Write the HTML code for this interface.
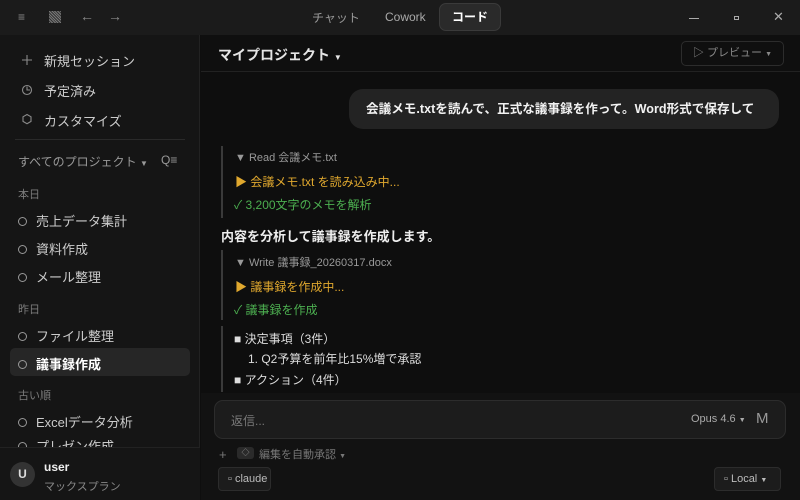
<!DOCTYPE html>
<html><head><meta charset="utf-8"><style>
*{box-sizing:border-box;margin:0;padding:0}
body{width:800px;height:500px;background:#0e0e0e;font-family:"Liberation Sans","Noto Sans CJK JP",sans-serif;color:#ddd;position:relative;overflow:hidden;font-size:13px}
.abs{position:absolute;white-space:nowrap}
#top{left:0;top:0;width:800px;height:35px;background:#1b1b1b}
#side{left:0;top:35px;width:200px;height:465px;background:#151515;border-right:1px solid #222}
#hdr{left:201px;top:35px;width:599px;height:37px;border-bottom:1px solid #222;background:#0f0f0f}
.g{color:#8a8a8a}
.it{font-size:13px;color:#ccc}
.sec{font-size:11px;color:#7a7a7a}
.circ{display:inline-block;width:9px;height:9px;border:1.3px solid #999;border-radius:50%;margin-right:9px;vertical-align:0px}
.bar{width:2px;background:#3a3a3a}
</style></head><body>
<div class="abs" id="top"></div>
<div class="abs g" style="left:18px;top:10px;font-size:12px">≡</div>
<div class="abs" style="left:49px;top:11px;width:12px;height:12px;background:repeating-linear-gradient(45deg,#777 0 1px,#333 1px 2px)"></div>
<div class="abs g" style="left:80px;top:8px;font-size:14px">←</div>
<div class="abs g" style="left:108px;top:8px;font-size:14px">→</div>
<div class="abs" style="left:312px;top:9px;font-size:12px;color:#999">チャット</div>
<div class="abs" style="left:385px;top:10px;font-size:12px;color:#aaa">Cowork</div>
<div class="abs" style="left:439px;top:3px;width:62px;height:28px;background:#2a2a2a;border:1px solid #3a3a3a;border-radius:7px;color:#fff;font-weight:bold;font-size:12px;text-align:center;line-height:26px">コード</div>
<div class="abs" style="left:689px;top:18px;width:10px;height:1px;background:#aaa"></div>
<div class="abs" style="left:734px;top:16px;width:5px;height:4px;border:1px solid #aaa"></div>
<div class="abs g" style="left:773px;top:9px;font-size:13px;color:#aaa">✕</div>

<div class="abs" id="side"></div>
<svg class="abs" style="left:0;top:0" width="40" height="140" fill="none" stroke="#8a8a8a" stroke-width="1.1">
<path d="M27 55v10M22 60h10"/>
<circle cx="27" cy="90" r="4.5"/><path d="M27 86.5v3.5h3"/>
<path d="M27 114.5l4 2.3v4.6l-4 2.3-4-2.3v-4.6z"/>
</svg>
<div class="abs it" style="left:44px;top:51px">新規セッション</div>
<div class="abs it" style="left:44px;top:81px">予定済み</div>
<div class="abs it" style="left:44px;top:111px">カスタマイズ</div>
<div class="abs" style="left:15px;top:139px;width:170px;height:1px;background:#2a2a2a"></div>
<div class="abs" style="left:18px;top:153px;font-size:12px;color:#999">すべてのプロジェクト <span style="font-size:8px">▼</span></div>
<div class="abs" style="left:161px;top:153px;font-size:12px;color:#999">Q≡</div>
<div class="abs sec" style="left:18px;top:186px">本日</div>
<div class="abs it" style="left:18px;top:211px"><span class="circ"></span>売上データ集計</div>
<div class="abs it" style="left:18px;top:239px"><span class="circ"></span>資料作成</div>
<div class="abs it" style="left:18px;top:267px"><span class="circ"></span>メール整理</div>
<div class="abs sec" style="left:18px;top:301px">昨日</div>
<div class="abs it" style="left:18px;top:326px"><span class="circ"></span>ファイル整理</div>
<div class="abs" style="left:10px;top:348px;width:180px;height:28px;background:#262626;border-radius:5px"></div>
<div class="abs it" style="left:18px;top:354px;color:#fff;font-weight:bold"><span class="circ"></span>議事録作成</div>
<div class="abs sec" style="left:18px;top:387px">古い順</div>
<div class="abs it" style="left:18px;top:412px"><span class="circ"></span>Excelデータ分析</div>
<div class="abs it" style="left:18px;top:440px;height:7px;overflow:hidden;line-height:13px"><span class="circ"></span>プレゼン作成</div>
<div class="abs" style="left:0;top:447px;width:200px;height:53px;background:#151515;border-top:1px solid #222"></div>
<div class="abs" style="left:10px;top:462px;width:25px;height:25px;border-radius:50%;background:#333;color:#ddd;font-size:12px;text-align:center;line-height:25px;font-weight:bold">U</div>
<div class="abs" style="left:44px;top:460px;font-size:12px;color:#eee;font-weight:bold">user</div>
<div class="abs" style="left:44px;top:478px;font-size:11px;color:#888">マックスプラン</div>

<div class="abs" id="hdr"></div>
<div class="abs" style="left:218px;top:45px;font-size:14px;font-weight:bold;color:#e5e5e5">マイプロジェクト <span style="font-size:8px">▼</span></div>
<div class="abs" style="left:681px;top:41px;width:103px;height:25px;border:1px solid #2c2c2c;border-radius:5px;color:#888;font-size:11px;line-height:23px;padding-left:11px">▷ プレビュー <span style="font-size:7px">▼</span></div>

<div class="abs" style="left:349px;top:89px;width:430px;height:40px;background:#232323;border-radius:14px;color:#f2f2f2;font-weight:bold;font-size:12.6px;line-height:40px;padding-left:17px">会議メモ.txtを読んで、正式な議事録を作って。Word形式で保存して</div>

<div class="abs bar" style="left:221px;top:146px;height:72px"></div>
<div class="abs" style="left:235px;top:149px;font-size:11px;color:#999">▼ Read 会議メモ.txt</div>
<div class="abs" style="left:235px;top:173px;font-size:12px;color:#e0a82e">▶ 会議メモ.txt を読み込み中...</div>
<div class="abs" style="left:234px;top:196px;font-size:12px;color:#4caf50">✓ 3,200文字のメモを解析</div>
<div class="abs" style="left:221px;top:226px;font-size:13px;color:#eee;font-weight:bold">内容を分析して議事録を作成します。</div>
<div class="abs bar" style="left:221px;top:250px;height:70px"></div>
<div class="abs" style="left:235px;top:254px;font-size:11px;color:#999">▼ Write 議事録_20260317.docx</div>
<div class="abs" style="left:235px;top:278px;font-size:12px;color:#e0a82e">▶ 議事録を作成中...</div>
<div class="abs" style="left:234px;top:301px;font-size:12px;color:#4caf50">✓ 議事録を作成</div>
<div class="abs bar" style="left:221px;top:326px;height:66px"></div>
<div class="abs" style="left:234px;top:330px;font-size:12px;color:#ddd">■ 決定事項（3件）</div>
<div class="abs" style="left:248px;top:350px;font-size:12px;color:#ddd">1. Q2予算を前年比15%増で承認</div>
<div class="abs" style="left:234px;top:371px;font-size:12px;color:#ddd">■ アクション（4件）</div>

<div class="abs" style="left:201px;top:393px;width:599px;height:107px;background:#121212"></div>
<div class="abs" style="left:214px;top:400px;width:572px;height:39px;background:#1c1c1c;border:1px solid #2c2c2c;border-radius:9px"></div>
<div class="abs" style="left:231px;top:412px;font-size:12px;color:#777">返信...</div>
<div class="abs" style="left:691px;top:413px;font-size:11px;color:#aaa">Opus 4.6 <span style="font-size:7px">▼</span></div>
<div class="abs" style="left:756px;top:410px;font-size:15px;color:#999">M</div>
<div class="abs" style="left:219px;top:447px;font-size:13px;color:#777">+</div>
<div class="abs" style="left:237px;top:447px;width:17px;height:12px;background:#2a2a2a;border-radius:3px;font-size:8px;color:#999;text-align:center;line-height:12px">◇</div>
<div class="abs" style="left:259px;top:446px;font-size:11px;color:#777">編集を自動承認 <span style="font-size:7px">▼</span></div>
<div class="abs" style="left:218px;top:467px;width:53px;height:24px;background:#1c1c1c;border:1px solid #2c2c2c;border-radius:4px;font-size:11px;color:#bbb;line-height:22px;padding-left:9px">▫ claude</div>
<div class="abs" style="left:714px;top:467px;width:67px;height:24px;background:#1c1c1c;border:1px solid #2c2c2c;border-radius:4px;font-size:11px;color:#bbb;line-height:22px;padding-left:9px">▫ Local <span style="font-size:7px">▼</span></div>
</body></html>
